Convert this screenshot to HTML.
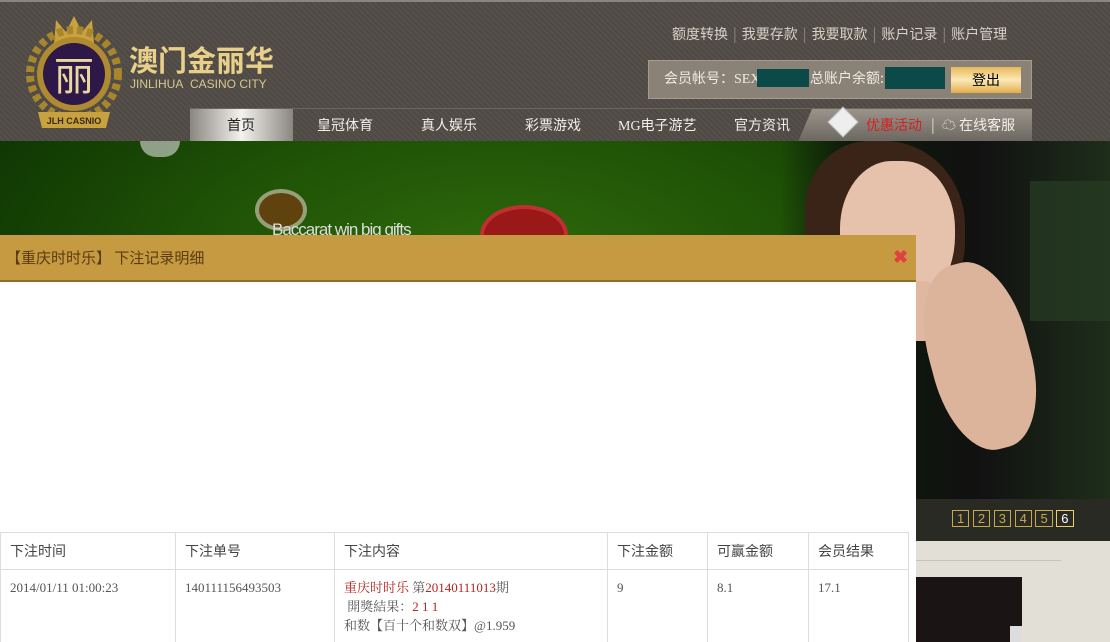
<!DOCTYPE html>
<html><head><meta charset="utf-8"><style>
*{margin:0;padding:0;box-sizing:border-box}
html,body{width:1110px;height:642px;overflow:hidden}
body{position:relative;font-family:"Liberation Serif","Noto Serif CJK SC","Noto Sans CJK SC",serif;background:#e2dfd7}
.hdr{position:absolute;left:0;top:0;width:1110px;height:141px;background:repeating-linear-gradient(45deg,#4e4944 0 2px,#55504a 2px 4px);border-top:2px solid #8a857d}
.a{position:absolute;font-size:14px;color:#d8d2c8;font-family:"Noto Sans CJK SC",sans-serif;white-space:nowrap}
.nav{position:absolute;top:106px;left:190px;width:842px;height:34px;border-top:1px solid #6a655e}
.nav span{position:absolute;top:6px;font-size:14px;color:#f2eee8;font-family:"Noto Sans CJK SC",sans-serif;white-space:nowrap}
.ban{position:absolute;left:0;top:141px;width:1110px;height:400px;overflow:hidden;background:radial-gradient(ellipse at 45% 30%,#2f6a0c 0,#1f5206 35%,#0d3303 70%,#082502 100%)}
.mh{position:absolute;left:0;top:235px;width:916px;height:47px;background:#c69a40;border-bottom:2px solid #8d6e2a}
.mb{position:absolute;left:0;top:282px;width:916px;height:360px;background:#fff}
table{position:absolute;left:0;top:532px;border-collapse:collapse;font-size:13px;color:#555}
td,th{border:1px solid #ddd;text-align:left;padding:0 9px;vertical-align:top;font-weight:normal}
th{height:37px;vertical-align:middle;font-family:"Noto Sans CJK SC",sans-serif;color:#444;font-size:14px}
td{padding-top:8px;height:80px;line-height:19px}
.r{color:#b3261e}
.s{color:#8f8a82;margin:0 5px}
</style></head><body>
<div class="hdr">
 <svg style="position:absolute;left:14px;top:10px" width="120" height="125">
  <path d="M40 32 L42 8 L52 20 L60 4 L68 20 L78 8 L80 32 Z" fill="#c9a240"/>
  <circle cx="60" cy="62" r="44" fill="none" stroke="#a8862c" stroke-width="8" stroke-dasharray="6 4"/>
  <circle cx="60" cy="62" r="37" fill="#b08a30"/>
  <circle cx="60" cy="62" r="31" fill="#2e1848"/>
  <text x="60" y="78" fill="#e8d8a0" font-size="40" text-anchor="middle" font-family="Noto Sans CJK SC">丽</text>
  <path d="M24 100 L96 100 L92 116 L28 116 Z" fill="#c9a240"/>
  <text x="60" y="112" font-size="9" text-anchor="middle" fill="#3a2a10" font-family="Liberation Sans" font-weight="bold">JLH CASNIO</text>
 </svg>
 <div style="position:absolute;left:129px;top:36px;font-size:29px;color:#e8cf8a;font-family:'Noto Sans CJK SC',sans-serif;font-weight:bold;letter-spacing:0">澳门金丽华</div>
 <div style="position:absolute;left:130px;top:75px;font-size:12px;color:#d8c690;font-family:'Liberation Sans',sans-serif">JINLIHUA&nbsp; CASINO CITY</div>
 <div class="a" style="left:672px;top:22px">额度转换<span class="s">|</span>我要存款<span class="s">|</span>我要取款<span class="s">|</span>账户记录<span class="s">|</span>账户管理</div>
 <div style="position:absolute;left:648px;top:58px;width:384px;height:39px;background:#8a8177;border:1px solid #a59c90"></div>
 <div class="a" style="left:664px;top:66px;color:#f0ece4">会员帐号：<span style="font-family:'Liberation Serif'">SEX8</span></div>
 <div style="position:absolute;left:757px;top:67px;width:52px;height:18px;background:#0c4a4a"></div>
 <div class="a" style="left:810px;top:66px;color:#f0ece4">总账户余额:</div>
 <div style="position:absolute;left:885px;top:65px;width:60px;height:22px;background:#0c4a4a"></div>
 <div style="position:absolute;left:951px;top:65px;width:70px;height:26px;background:linear-gradient(#e9b85a,#fbe9b8,#e4ad4a);text-align:center;font-size:14px;line-height:26px;font-family:'Noto Sans CJK SC'">登出</div>
 <div class="nav">
  <div style="position:absolute;left:0;top:0;width:103px;height:33px;background:linear-gradient(90deg,#8a8680,#f4f2ee 50%,#8a8680)"></div>
  <span style="left:37px;color:#222">首页</span>
  <span style="left:127px">皇冠体育</span><span style="left:231px">真人娱乐</span><span style="left:335px">彩票游戏</span>
  <span style="left:428px;font-family:'Liberation Serif','Noto Sans CJK SC'">MG电子游艺</span><span style="left:544px">官方资讯</span>
  <div style="position:absolute;left:608px;top:0;width:234px;height:33px;background:linear-gradient(#9a948b,#6b665f);clip-path:polygon(14px 0,100% 0,100% 100%,0 100%)"></div>
  <div style="position:absolute;left:642px;top:2px;width:22px;height:22px;background:#eee;transform:rotate(45deg);border:1px solid #bbb"></div>
  <span style="left:676px;color:#d62020">优惠活动</span>
  <span style="left:741px;color:#ddd">|</span>
  <span style="left:752px">☁ 在线客服</span>
 </div>
</div>
<div class="ban">
 <div style="position:absolute;left:140px;top:0;width:40px;height:16px;border-radius:0 0 20px 20px;background:#ddd;opacity:.6"></div>
 <div style="position:absolute;left:255px;top:48px;width:52px;height:42px;border-radius:50%;background:#7a3a10;border:4px solid #c8c0a8;opacity:.7"></div>
 <div style="position:absolute;left:272px;top:79px;font-size:17px;color:#ddd;font-family:'Liberation Sans';letter-spacing:-1px">Baccarat win big gifts</div>
 <div style="position:absolute;left:480px;top:64px;width:88px;height:60px;border-radius:50%;background:#9a1818;border:4px solid #c03030"></div>
 <div style="position:absolute;left:780px;top:0;width:330px;height:400px;background:linear-gradient(90deg,rgba(0,0,0,0),#0e1a0a 20%,#111 60%,#1e2e1a)"></div>
 <div style="position:absolute;left:805px;top:0;width:160px;height:170px;background:#3a2418;border-radius:40% 50% 40% 40%"></div>
 <div style="position:absolute;left:840px;top:20px;width:115px;height:150px;background:#e6c2ad;border-radius:45% 45% 50% 50%"></div>
 <div style="position:absolute;left:900px;top:140px;width:40px;height:60px;background:#e0b8a0;border-radius:40%"></div>
 <div style="position:absolute;left:930px;top:120px;width:100px;height:190px;background:#dcb49c;border-radius:45%;transform:rotate(-15deg)"></div>
 <div style="position:absolute;left:1030px;top:40px;width:80px;height:140px;background:#263a22;opacity:.8"></div>
 <div style="position:absolute;left:916px;top:358px;width:194px;height:42px;background:#2a2a24"></div>
 <div style="position:absolute;left:952px;top:370px;font-size:13px;color:#c9a84a;font-family:'Liberation Sans'">
  <span style="border:1px solid #c9a84a;padding:0 4px">1</span> <span style="border:1px solid #c9a84a;padding:0 4px">2</span> <span style="border:1px solid #c9a84a;padding:0 4px">3</span> <span style="border:1px solid #c9a84a;padding:0 4px">4</span> <span style="border:1px solid #c9a84a;padding:0 4px">5</span> <span style="border:1px solid #e8d070;padding:0 4px;color:#fff">6</span></div>
</div>
<div style="position:absolute;left:916px;top:560px;width:145px;height:1px;background:#c8c4bb"></div>
<div style="position:absolute;left:916px;top:577px;width:106px;height:65px;background:#1a1414"></div>
<div style="position:absolute;left:1010px;top:626px;width:12px;height:16px;background:#ddd"></div>
<div class="mh"><div style="position:absolute;left:6px;top:12px;font-size:15px;color:#5a3c10;font-family:'Noto Sans CJK SC',sans-serif">【重庆时时乐】 下注记录明细</div>
<div style="position:absolute;left:893px;top:12px;font-size:18px;color:#e04040;font-weight:bold;font-family:'Liberation Sans'">✖</div></div>
<div class="mb"></div>
<table>
<tr><th style="width:175px">下注时间</th><th style="width:159px">下注单号</th><th style="width:273px">下注内容</th><th style="width:100px">下注金额</th><th style="width:101px">可赢金额</th><th style="width:100px">会员结果</th></tr>
<tr><td>2014/01/11 01:00:23</td><td>140111156493503</td><td><span class="r">重庆时时乐</span> 第<span class="r">20140111013</span>期<br>&nbsp;開獎結果：<span class="r">2 1 1</span><br>和数【百十个和数双】@1.959</td><td>9</td><td>8.1</td><td>17.1</td></tr>
</table>
</body></html>
